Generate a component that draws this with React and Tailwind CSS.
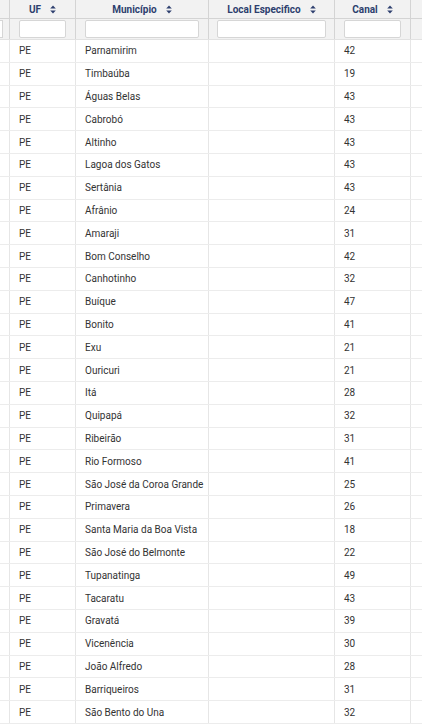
import React from "react";

const rows = [
  ["Parnamirim", "42"],
  ["Timbaúba", "19"],
  ["Águas Belas", "43"],
  ["Cabrobó", "43"],
  ["Altinho", "43"],
  ["Lagoa dos Gatos", "43"],
  ["Sertânia", "43"],
  ["Afrânio", "24"],
  ["Amaraji", "31"],
  ["Bom Conselho", "42"],
  ["Canhotinho", "32"],
  ["Buíque", "47"],
  ["Bonito", "41"],
  ["Exu", "21"],
  ["Ouricuri", "21"],
  ["Itá", "28"],
  ["Quipapá", "32"],
  ["Ribeirão", "31"],
  ["Rio Formoso", "41"],
  ["São José da Coroa Grande", "25"],
  ["Primavera", "26"],
  ["Santa Maria da Boa Vista", "18"],
  ["São José do Belmonte", "22"],
  ["Tupanatinga", "49"],
  ["Tacaratu", "43"],
  ["Gravatá", "39"],
  ["Vicenência", "30"],
  ["João Alfredo", "28"],
  ["Barriqueiros", "31"],
  ["São Bento do Una", "32"],
];

function SortIcon() {
  return (
    <svg width="6" height="9" viewBox="0 0 6 9" className="ml-[9px] shrink-0">
      <path d="M3 0.6 L5.8 3.6 H0.2 Z" fill="#2d3f6e" />
      <path d="M3 8.4 L5.8 5.4 H0.2 Z" fill="#2d3f6e" />
    </svg>
  );
}

function HeadCell({ label, w }) {
  return (
    <div className={`${w} shrink-0 h-full flex items-center justify-center border-r border-[#d4d4d4]`}>
      <span className="font-bold text-[10px] text-[#2d3f6e] whitespace-nowrap">{label}</span>
      {label && <SortIcon />}
    </div>
  );
}

function FilterCell({ w, pad = "px-[9px]" }) {
  return (
    <div className={`${w} shrink-0 h-full flex items-center ${pad} border-r border-[#d4d4d4]`}>
      <div className="w-full h-[18px] bg-white border border-[#d6d6d6] rounded-[2px]" />
    </div>
  );
}

export default function App() {
  const cols = ["w-[10px]", "w-[66px]", "w-[133px]", "w-[126px]", "w-[76px]", "w-[11px]"];
  return (
    <div className="w-[422px] h-[728px] overflow-hidden bg-white font-['Roboto',sans-serif]">
      <div className="flex h-[19px] bg-[#f2f2f2] border-b border-[#d4d4d4] ml-[-1px]">
        <HeadCell w="w-[11px]" label="" />
        <HeadCell w={cols[1]} label="UF" />
        <HeadCell w={cols[2]} label="Município" />
        <HeadCell w={cols[3]} label="Local Especifico" />
        <HeadCell w={cols[4]} label="Canal" />
        <div className="flex-1" />
      </div>
      <div className="flex h-[21px] bg-[#f2f2f2] border-b border-[#e2e2e2] ml-[-1px]">
        <div className="w-[11px] shrink-0 h-full flex items-center border-r border-[#d4d4d4]">
          <div className="w-[4px] h-[18px] bg-white border border-[#d6d6d6] border-l-0" />
        </div>
        <FilterCell w={cols[1]} />
        <FilterCell w={cols[2]} />
        <FilterCell w={cols[3]} pad="px-[8px]" />
        <FilterCell w={cols[4]} />
        <div className="flex-1" />
      </div>
      {rows.map(([m, c], i) => (
        <div key={i} className="flex h-[22.8px] border-b border-[#ececec] text-[10px] text-[#333] whitespace-nowrap ml-[-1px]">
          <div className="w-[11px] shrink-0 border-r border-[#e6e6e6]" />
          <div className={`${cols[1]} shrink-0 flex items-center pl-[9px] border-r border-[#e6e6e6]`}>PE</div>
          <div className={`${cols[2]} shrink-0 flex items-center pl-[9px] border-r border-[#e6e6e6]`}>{m}</div>
          <div className={`${cols[3]} shrink-0 border-r border-[#e6e6e6]`} />
          <div className={`${cols[4]} shrink-0 flex items-center pl-[9px] border-r border-[#e6e6e6]`}>{c}</div>
          <div className="flex-1" />
        </div>
      ))}
    </div>
  );
}
